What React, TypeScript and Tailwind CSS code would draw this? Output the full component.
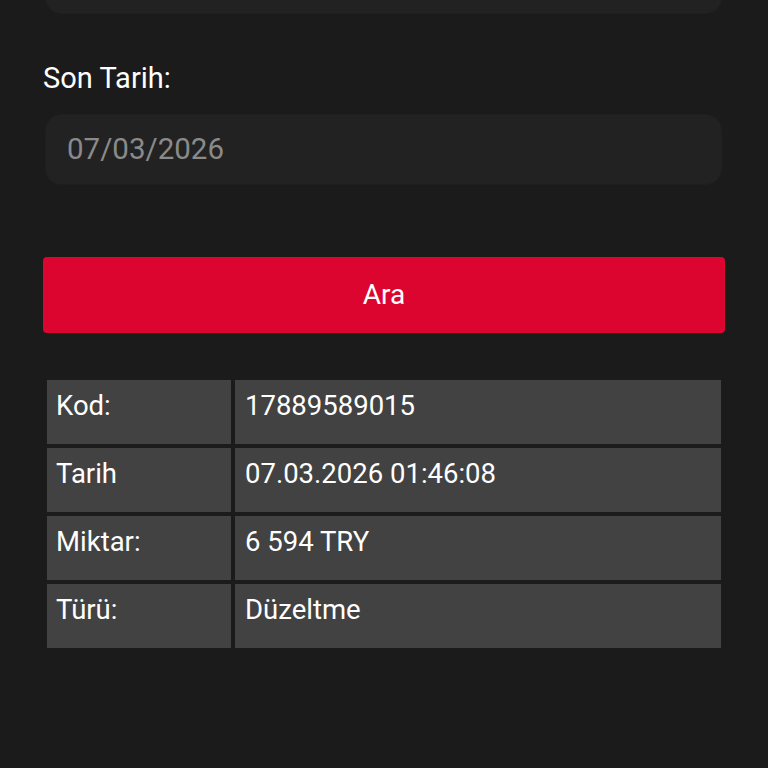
import React from "react";

const rows = [
  { label: "Kod:", value: "17889589015" },
  { label: "Tarih", value: "07.03.2026 01:46:08" },
  { label: "Miktar:", value: "6 594 TRY" },
  { label: "Türü:", value: "Düzeltme" },
];

const App = () => {
  return (
    <div
      className="min-h-[768px] w-full overflow-hidden bg-[#1b1b1b] text-white"
      style={{ fontFamily: "Roboto, 'Noto Sans', sans-serif" }}
    >
      <div className="px-[43px]">
        {/* previous input, cut off at the top */}
        <div className="ml-[2px] mr-[3px] -mt-[58px] h-[72px] rounded-[16px] border border-[#1f1f1f] bg-[#222222]" />

        <label className="mt-[44px] block text-[29px] leading-[40px]">Son Tarih:</label>

        <div className="ml-[2px] mr-[3px] mt-[16px] flex h-[71px] items-center rounded-[16px] border border-[#1f1f1f] bg-[#222222] px-[21px]">
          <span className="text-[29.5px] text-[#8a8a8a]">07/03/2026</span>
        </div>

        <button className="mt-[72px] flex h-[76px] w-full items-center justify-center rounded-[4px] bg-[#dc052f] text-[28px] text-white">
          Ara
        </button>

        <table className="mt-[43px] w-full border-separate border-spacing-[4px]">
          <tbody>
            {rows.map((row) => (
              <tr key={row.label}>
                <td className="h-[64px] w-[184px] bg-[#424242] px-[9px] pt-[9px] align-top text-[27.5px] leading-[33px]">
                  {row.label}
                </td>
                <td className="h-[64px] bg-[#424242] px-[10px] pt-[9px] align-top text-[27.5px] leading-[33px]">
                  {row.value}
                </td>
              </tr>
            ))}
          </tbody>
        </table>
      </div>
    </div>
  );
};

export default App;
